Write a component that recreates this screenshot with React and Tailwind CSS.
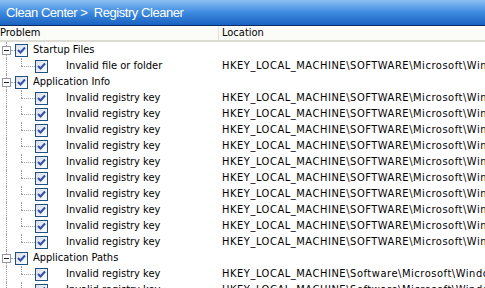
import React from "react";

const Check = () => (
  <div className="w-[13px] h-[13px] border border-[#1c5180] bg-gradient-to-br from-[#d8dde8] to-white flex items-center justify-center shrink-0">
    <svg width="9" height="9" viewBox="0 0 9 9">
      <path d="M1 4 L3.5 6.5 L8 1.5" fill="none" stroke="#2f52a8" strokeWidth="2" />
    </svg>
  </div>
);

const Minus = () => (
  <div className="w-[9px] h-[9px] border border-[#919b9c] bg-white flex items-center justify-center shrink-0">
    <div className="w-[5px] h-px bg-[#1f1f1f]" />
  </div>
);

const loc1 = "HKEY_LOCAL_MACHINE\\SOFTWARE\\Microsoft\\Windows\\CurrentVersion";
const loc2 = "HKEY_LOCAL_MACHINE\\Software\\Microsoft\\Windows\\CurrentVersion";

const groups = [
  { name: "Startup Files", items: [["Invalid file or folder", loc1]] },
  { name: "Application Info", items: Array.from({ length: 10 }, () => ["Invalid registry key", loc1]) },
  { name: "Application Paths", items: [["Invalid registry key", loc2], ["Invalid registry key", loc2]] },
];

const GroupRow = ({ name }) => (
  <div className="h-4 flex items-center relative overflow-hidden">
    <div className="absolute left-[6px] top-0 bottom-0 border-l border-dotted border-[#a0a0a0]" />
    <div className="ml-[2px] relative z-10 shrink-0"><Minus /></div>
    <div className="w-[4px] shrink-0 border-t border-dotted border-[#a0a0a0]" />
    <Check />
    <span className="ml-[5px] whitespace-nowrap">{name}</span>
  </div>
);

const ItemRow = ({ label, loc }) => (
  <div className="h-4 flex items-center relative overflow-hidden">
    <div className="absolute left-[6px] top-0 bottom-0 border-l border-dotted border-[#a0a0a0]" />
    <div className="absolute left-[21px] top-0 h-[8px] border-l border-dotted border-[#a0a0a0]" />
    <div className="w-[21px] shrink-0" />
    <div className="w-[14px] shrink-0 border-t border-dotted border-[#a0a0a0] mt-px" />
    <Check />
    <span className="ml-[18px] w-[156px] shrink-0 whitespace-nowrap">{label}</span>
    <span className="whitespace-nowrap shrink-0 tracking-[0.55px]">{loc}</span>
  </div>
);

export default function App() {
  return (
    <div className="w-[485px] h-[288px] overflow-hidden bg-white text-[11px] text-black" style={{ fontFamily: "'DejaVu Sans Condensed', 'DejaVu Sans', sans-serif" }}>
      <div className="h-[25px] bg-gradient-to-b from-[#8cc0f4] via-[#3d8ae0] to-[#1a62c0] flex items-center pl-[6px] text-white text-[13px] tracking-[-0.45px]" style={{ fontFamily: "Arial, 'Liberation Sans', sans-serif" }}>
        Clean Center &gt;&nbsp; Registry Cleaner
      </div>
      <div className="h-px bg-[#0a2d6a]" />
      <div className="h-[16px] flex items-center bg-[#fbfbf8] border-b-2 border-[#dcdcd4]">
        <div className="w-[219px] border-r border-[#e3e3da] h-full flex items-center">Problem</div>
        <div className="pl-[3px]">Location</div>
      </div>
      <div className="flex flex-col">
        {groups.map((g) => (
          <React.Fragment key={g.name}>
            <GroupRow name={g.name} />
            {g.items.map(([l, loc], i) => (
              <ItemRow key={i} label={l} loc={loc} />
            ))}
          </React.Fragment>
        ))}
      </div>
    </div>
  );
}
